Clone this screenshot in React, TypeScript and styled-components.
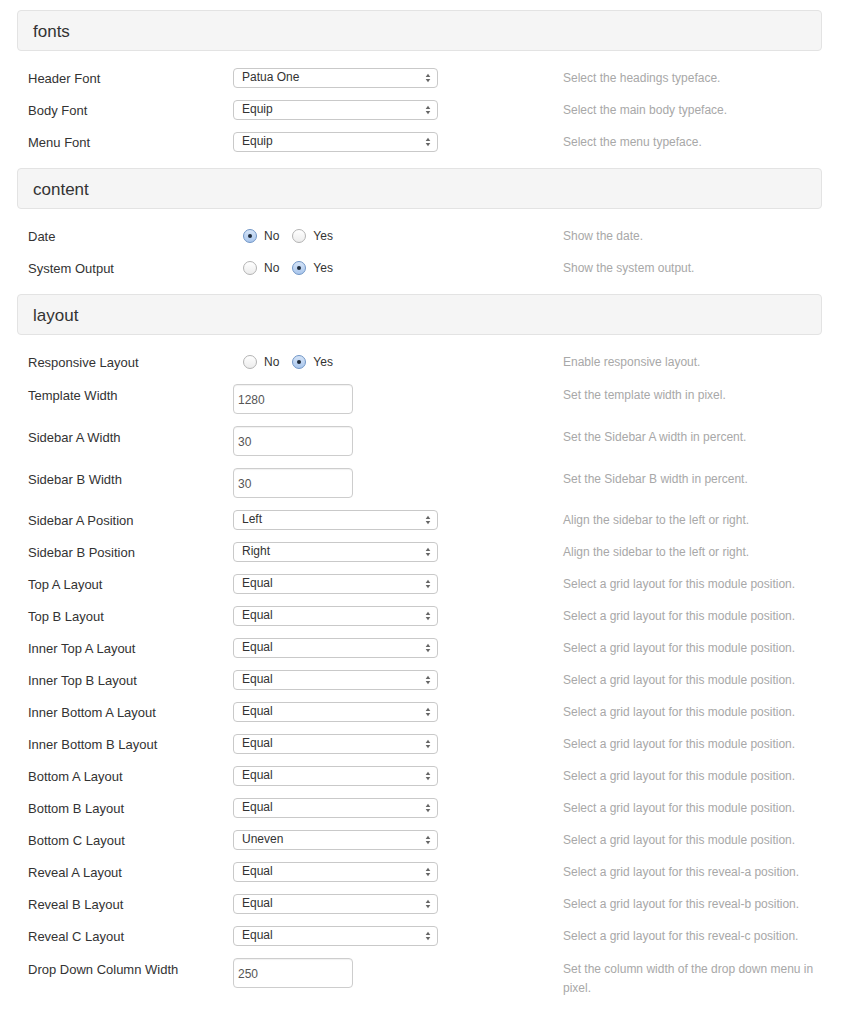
import React from "react";
import styled, { createGlobalStyle } from "styled-components";

const GlobalStyle = createGlobalStyle`
  body {
    margin: 0;
    background: #fff;
    font-family: "Liberation Sans", Arial, sans-serif;
    color: #333;
  }
`;

const Page = styled.div`
  padding: 10px 23px 20px 17px;
`;

const SectionHeader = styled.div`
  height: 39px;
  display: flex;
  align-items: center;
  padding: 2px 0 0 15px;
  box-sizing: border-box;
  height: 41px;
  background: #f5f5f5;
  border: 1px solid #e3e3e3;
  border-radius: 4px;
  font-size: 17px;
  color: #333;
  margin-bottom: 17px;
`;

const Rows = styled.div`
  display: flex;
  flex-direction: column;
  gap: 12px;
  margin-bottom: 16px;
`;

const Row = styled.div`
  display: grid;
  grid-template-columns: 205px 330px 1fr;
  align-items: start;
  padding-left: 11px;
`;

const Label = styled.div<{ $offset?: number }>`
  font-size: 13px;
  line-height: 18px;
  padding-top: ${(p) => p.$offset ?? 2}px;
`;

const Description = styled.div<{ $offset?: number }>`
  font-size: 12px;
  line-height: 19px;
  color: #a8a8a8;
  padding-top: ${(p) => p.$offset ?? 1}px;
`;

const SelectBox = styled.div`
  position: relative;
  height: 18px;
  width: 195px;
  border: 1px solid #c9c9c9;
  border-radius: 4px;
  background: #fff;
  font-size: 12px;
  line-height: 16px;
  padding-left: 8px;
  color: #333;
`;

const Arrows = styled.svg`
  position: absolute;
  right: 6px;
  top: 4px;
`;

const TextInput = styled.div`
  width: 114px;
  height: 28px;
  border: 1px solid #cdcdcd;
  border-radius: 4px;
  box-shadow: inset 0 1px 1px rgba(0, 0, 0, 0.06);
  font-size: 12px;
  line-height: 30px;
  padding-left: 4px;
  color: #555;
`;

const RadioGroup = styled.div`
  display: flex;
  align-items: center;
  height: 19px;
  padding-left: 10px;
  gap: 8px;
  font-size: 12px;
`;

const RadioItem = styled.label`
  display: flex;
  align-items: center;
  gap: 7px;
  margin-right: 5px;
`;

const RadioCircle = styled.span<{ $checked: boolean }>`
  width: 12px;
  height: 12px;
  border-radius: 50%;
  border: 1px solid ${(p) => (p.$checked ? "#6f95c6" : "#b3b3b3")};
  background: ${(p) =>
    p.$checked
      ? "linear-gradient(#d5e4f7, #a9c6ec)"
      : "linear-gradient(#ffffff, #ececec)"};
  display: flex;
  align-items: center;
  justify-content: center;
  &::after {
    content: "";
    display: ${(p) => (p.$checked ? "block" : "none")};
    width: 4px;
    height: 4px;
    border-radius: 50%;
    background: #1d2a3a;
  }
`;

const Select: React.FC<{ value: string }> = ({ value }) => (
  <SelectBox>
    {value}
    <Arrows width="6" height="10" viewBox="0 0 6 10">
      <path d="M3 0.8 L5.3 4 L0.7 4 Z" fill="#666" />
      <path d="M3 9.2 L5.3 6 L0.7 6 Z" fill="#666" />
    </Arrows>
  </SelectBox>
);

const Radios: React.FC<{ yes: boolean }> = ({ yes }) => (
  <RadioGroup>
    <RadioItem>
      <RadioCircle $checked={!yes} />
      No
    </RadioItem>
    <RadioItem>
      <RadioCircle $checked={yes} />
      Yes
    </RadioItem>
  </RadioGroup>
);

type Field =
  | { label: string; kind: "select"; value: string; desc: string }
  | { label: string; kind: "radio"; yes: boolean; desc: string }
  | { label: string; kind: "input"; value: string; desc: string };

const gridDesc = "Select a grid layout for this module position.";

const sections: { title: string; fields: Field[] }[] = [
  {
    title: "fonts",
    fields: [
      { label: "Header Font", kind: "select", value: "Patua One", desc: "Select the headings typeface." },
      { label: "Body Font", kind: "select", value: "Equip", desc: "Select the main body typeface." },
      { label: "Menu Font", kind: "select", value: "Equip", desc: "Select the menu typeface." },
    ],
  },
  {
    title: "content",
    fields: [
      { label: "Date", kind: "radio", yes: false, desc: "Show the date." },
      { label: "System Output", kind: "radio", yes: true, desc: "Show the system output." },
    ],
  },
  {
    title: "layout",
    fields: [
      { label: "Responsive Layout", kind: "radio", yes: true, desc: "Enable responsive layout." },
      { label: "Template Width", kind: "input", value: "1280", desc: "Set the template width in pixel." },
      { label: "Sidebar A Width", kind: "input", value: "30", desc: "Set the Sidebar A width in percent." },
      { label: "Sidebar B Width", kind: "input", value: "30", desc: "Set the Sidebar B width in percent." },
      { label: "Sidebar A Position", kind: "select", value: "Left", desc: "Align the sidebar to the left or right." },
      { label: "Sidebar B Position", kind: "select", value: "Right", desc: "Align the sidebar to the left or right." },
      { label: "Top A Layout", kind: "select", value: "Equal", desc: gridDesc },
      { label: "Top B Layout", kind: "select", value: "Equal", desc: gridDesc },
      { label: "Inner Top A Layout", kind: "select", value: "Equal", desc: gridDesc },
      { label: "Inner Top B Layout", kind: "select", value: "Equal", desc: gridDesc },
      { label: "Inner Bottom A Layout", kind: "select", value: "Equal", desc: gridDesc },
      { label: "Inner Bottom B Layout", kind: "select", value: "Equal", desc: gridDesc },
      { label: "Bottom A Layout", kind: "select", value: "Equal", desc: gridDesc },
      { label: "Bottom B Layout", kind: "select", value: "Equal", desc: gridDesc },
      { label: "Bottom C Layout", kind: "select", value: "Uneven", desc: gridDesc },
      { label: "Reveal A Layout", kind: "select", value: "Equal", desc: "Select a grid layout for this reveal-a position." },
      { label: "Reveal B Layout", kind: "select", value: "Equal", desc: "Select a grid layout for this reveal-b position." },
      { label: "Reveal C Layout", kind: "select", value: "Equal", desc: "Select a grid layout for this reveal-c position." },
      { label: "Drop Down Column Width", kind: "input", value: "250", desc: "Set the column width of the drop down menu in pixel." },
    ],
  },
];

const FieldRow: React.FC<{ field: Field }> = ({ field }) => {
  const isInput = field.kind === "input";
  return (
    <Row>
      <Label $offset={isInput ? 3 : 2}>{field.label}</Label>
      <div>
        {field.kind === "select" && <Select value={field.value} />}
        {field.kind === "radio" && <Radios yes={field.yes} />}
        {isInput && <TextInput>{field.value}</TextInput>}
      </div>
      <Description $offset={isInput ? 2 : 1}>{field.desc}</Description>
    </Row>
  );
};

export default function App() {
  return (
    <Page>
      <GlobalStyle />
      {sections.map((s) => (
        <div key={s.title}>
          <SectionHeader>{s.title}</SectionHeader>
          <Rows>
            {s.fields.map((f) => (
              <FieldRow key={f.label} field={f} />
            ))}
          </Rows>
        </div>
      ))}
    </Page>
  );
}
